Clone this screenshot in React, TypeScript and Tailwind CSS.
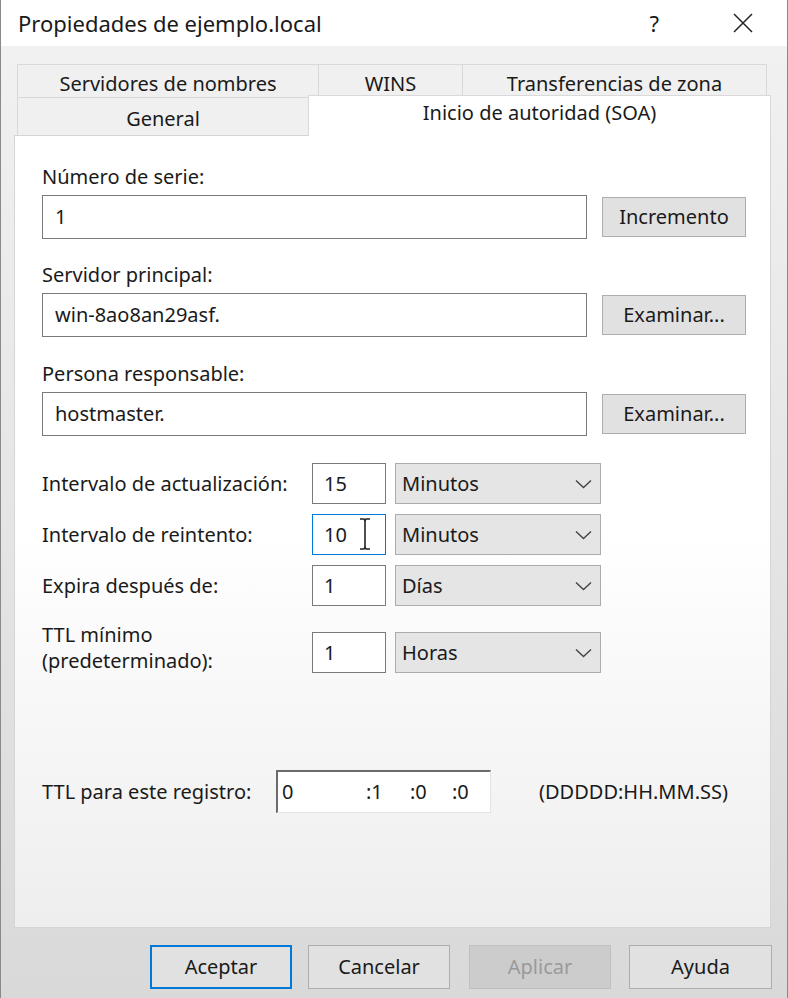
import React from "react";

const Chevron = () => (
  <svg width="17" height="10" viewBox="0 0 17 10" fill="none">
    <path d="M1 1.5L8.5 8.5L16 1.5" stroke="#444" strokeWidth="1.4" />
  </svg>
);

function Field({ value, width }: { value: string; width: string }) {
  return (
    <div className={`${width} h-[44px] border border-[#7a7a7a] bg-white flex items-center pl-[12px]`}>
      {value}
    </div>
  );
}

function SmallBox({
  value,
  focused,
  cursor,
}: {
  value: string;
  focused?: boolean;
  cursor?: boolean;
}) {
  return (
    <div
      className={`relative w-[74px] h-[41px] bg-white flex items-center pl-[11px] border ${
        focused ? "border-[#0078d7]" : "border-[#7a7a7a]"
      }`}
    >
      {value}
      {cursor && (
        <svg className="absolute left-[45px] top-[2px]" width="14" height="34" viewBox="0 0 14 34" fill="none">
          <path d="M2 2h4l1 1.5L8 2h4" stroke="#222" strokeWidth="1.4" />
          <path d="M7 3v28" stroke="#222" strokeWidth="1.6" />
          <path d="M2 32h4l1-1.5L8 32h4" stroke="#222" strokeWidth="1.4" />
        </svg>
      )}
    </div>
  );
}

function Combo({ value }: { value: string }) {
  return (
    <div className="ml-[9px] w-[206px] h-[41px] bg-[#e5e5e5] border border-[#acacac] flex items-center justify-between pl-[6px] pr-[8px]">
      <span>{value}</span>
      <Chevron />
    </div>
  );
}

function IntervalRow({
  label,
  value,
  unit,
  focused,
  cursor,
}: {
  label: string;
  value: string;
  unit: string;
  focused?: boolean;
  cursor?: boolean;
}) {
  return (
    <div className="flex items-center">
      <div className="w-[270px]">{label}</div>
      <SmallBox value={value} focused={focused} cursor={cursor} />
      <Combo value={unit} />
    </div>
  );
}

export default function App() {
  return (
    <div className="w-[788px] h-[998px] flex flex-col border-l border-r border-[#8a8a8a] text-[#1a1a1a] text-[20px] font-['Noto_Sans',sans-serif] overflow-hidden">
      {/* title bar */}
      <div className="h-[46px] bg-white flex items-center pl-[17px] pr-[34px] shrink-0">
        <div className="flex-1 text-[22px]">Propiedades de ejemplo.local</div>
        <div className="text-[22px] mr-[74px]">?</div>
        <svg width="20" height="20" viewBox="0 0 20 20" fill="none">
          <path d="M1 1L19 19M19 1L1 19" stroke="#222" strokeWidth="1.5" />
        </svg>
      </div>

      <div className="flex-1 flex flex-col bg-gradient-to-b from-[#f1f1f1] to-[#d9d9d9] px-[13px] pt-[18px]">
        {/* back tab row */}
        <div className="flex ml-[3px] h-[33px]">
          <div className="w-[302px] border-t border-l border-r border-[#d9d9d9] bg-[#f0f0f0] flex items-center justify-center pt-[5px]">
            Servidores de nombres
          </div>
          <div className="w-[144px] border-t border-r border-[#d9d9d9] bg-[#f0f0f0] flex items-center justify-center pt-[5px]">
            WINS
          </div>
          <div className="w-[304px] border-t border-r border-[#d9d9d9] bg-[#f0f0f0] flex items-center justify-center pt-[5px]">
            Transferencias de zona
          </div>
        </div>
        {/* front tab row */}
        <div className="flex ml-[3px] h-[38px] items-end">
          <div className="w-[291px] h-[38px] border-t border-l border-[#d9d9d9] bg-[#f0f0f0] flex items-center justify-center pt-[4px]">
            General
          </div>
          <div className="relative z-10 w-[463px] h-[41px] -mb-[1px] border-t border-l border-r border-[#d9d9d9] bg-white flex items-center justify-center pb-[6px]">
            Inicio de autoridad (SOA)
          </div>
        </div>

        {/* panel */}
        <div className="w-[757px] h-[793px] border border-[#d5d5d5] bg-gradient-to-b from-white via-white to-[#eeeeee] pl-[27px] pt-[28px] shrink-0">
          <div className="leading-[25px]">Número de serie:</div>
          <div className="flex items-center mt-[6px]">
            <Field value="1" width="w-[545px]" />
            <button className="ml-[15px] w-[144px] h-[40px] bg-[#e1e1e1] border border-[#adadad]">Incremento</button>
          </div>

          <div className="leading-[25px] mt-[23px]">Servidor principal:</div>
          <div className="flex items-center mt-[6px]">
            <Field value="win-8ao8an29asf." width="w-[545px]" />
            <button className="ml-[15px] w-[144px] h-[40px] bg-[#e1e1e1] border border-[#adadad]">Examinar...</button>
          </div>

          <div className="leading-[25px] mt-[24px]">Persona responsable:</div>
          <div className="flex items-center mt-[6px]">
            <Field value="hostmaster." width="w-[545px]" />
            <button className="ml-[15px] w-[144px] h-[40px] bg-[#e1e1e1] border border-[#adadad]">Examinar...</button>
          </div>

          <div className="mt-[27px] flex flex-col gap-[10px]">
            <IntervalRow label="Intervalo de actualización:" value="15" unit="Minutos" />
            <IntervalRow label="Intervalo de reintento:" value="10" unit="Minutos" focused cursor />
            <IntervalRow label="Expira después de:" value="1" unit="Días" />
          </div>

          <div className="flex items-start mt-[16px]">
            <div className="w-[270px] leading-[26px]">
              TTL mínimo
              <br />
              (predeterminado):
            </div>
            <div className="flex mt-[10px]">
              <SmallBox value="1" />
              <Combo value="Horas" />
            </div>
          </div>

          <div className="flex items-center mt-[96px]">
            <div className="w-[234px]">TTL para este registro:</div>
            <div className="w-[215px] h-[43px] bg-white border-t-2 border-l-2 border-r border-b border-t-[#6b6b6b] border-l-[#6b6b6b] border-r-[#e3e3e3] border-b-[#e3e3e3] flex items-center pl-[4px]">
              <span className="w-[84px]">0</span>
              <span className="w-[44px]">:1</span>
              <span className="w-[42px]">:0</span>
              <span>:0</span>
            </div>
            <div className="ml-[48px]">(DDDDD:HH.MM.SS)</div>
          </div>
        </div>

        {/* dialog buttons */}
        <div className="flex justify-end pr-[2px] mt-[17px]">
          <button className="w-[142px] h-[44px] bg-[#e1e1e1] border-2 border-[#0078d7]">Aceptar</button>
          <button className="ml-[16px] w-[142px] h-[44px] bg-[#e1e1e1] border border-[#adadad]">Cancelar</button>
          <button className="ml-[19px] w-[142px] h-[44px] bg-[#cccccc] border border-[#bfbfbf] text-[#9a9a9a]">Aplicar</button>
          <button className="ml-[18px] w-[143px] h-[44px] bg-[#e1e1e1] border border-[#adadad]">Ayuda</button>
        </div>
      </div>
    </div>
  );
}
